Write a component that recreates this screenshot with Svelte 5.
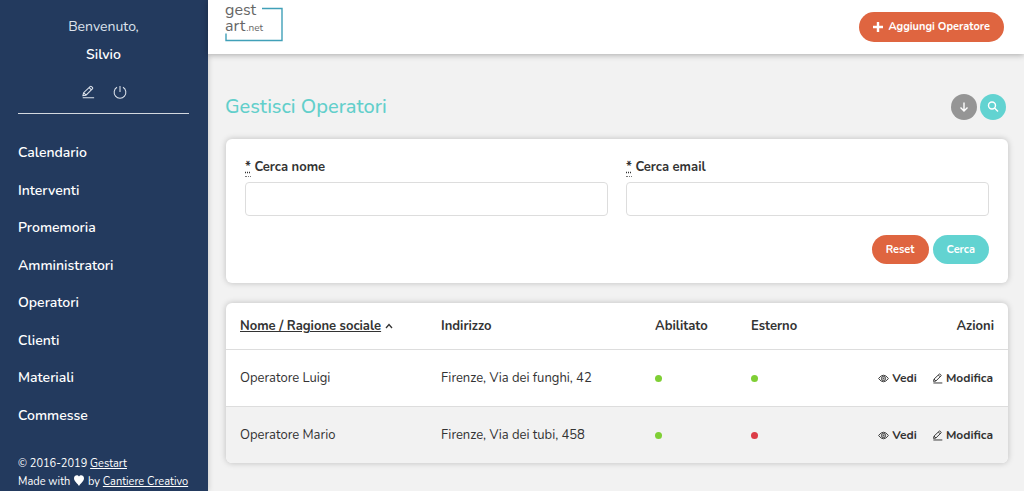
<script lang="ts">
type Operator = {
  name: string
  address: string
  enabled: boolean
  external: boolean
}

const menu: string[] = [
  'Calendario',
  'Interventi',
  'Promemoria',
  'Amministratori',
  'Operatori',
  'Clienti',
  'Materiali',
  'Commesse'
]

const operators: Operator[] = [
  { name: 'Operatore Luigi', address: 'Firenze, Via dei funghi, 42', enabled: true, external: true },
  { name: 'Operatore Mario', address: 'Firenze, Via dei tubi, 458', enabled: true, external: false }
]

let searchName = $state('')
let searchEmail = $state('')

function reset() {
  searchName = ''
  searchEmail = ''
}
</script>

{#snippet pencil()}
  <svg class="icon" viewBox="0 0 16 16" aria-hidden="true">
    <path d="M2 14.5h13M2.2 12.2l.8-3.4 7.4-7q.8-.7 1.6 0l1 1q.8.8 0 1.6l-7.3 7.2zM9.3 3l2.6 2.6M3 8.8l2.7 2.8" />
  </svg>
{/snippet}

{#snippet dot(on: boolean, label: string)}
  <span class="dot" class:off={!on} role="img" aria-label={label}></span>
{/snippet}

<div class="layout">
  <aside class="sidebar">
    <div class="welcome">
      <p>Benvenuto,</p>
      <p class="user">Silvio</p>
      <div class="user-actions">
        <a href="#profile" aria-label="Modifica profilo">{@render pencil()}</a>
        <a href="#logout" aria-label="Esci">
          <svg class="icon" viewBox="0 0 16 16" aria-hidden="true">
            <path d="M8 1v7M4.6 2.6a6.7 6.7 0 1 0 6.8 0" />
          </svg>
        </a>
      </div>
    </div>

    <nav>
      {#each menu as item}
        <a href="#{item.toLowerCase()}">{item}</a>
      {/each}
    </nav>

    <footer>
      <p>© 2016-2019 <a href="#gestart">Gestart</a></p>
      <p>
        Made with
        <svg class="heart" viewBox="0 0 10 11" role="img" aria-label="love">
          <path d="M5 11C4 8.800 0 6.500 0 3.200 0 .2 3.700-.7 5 1.500 6.300-.7 10 .2 10 3.200 10 6.500 6 8.800 5 11z" />
        </svg>
        by <a href="#cantiere">Cantiere Creativo</a>
      </p>
    </footer>
  </aside>

  <div class="main">
    <header>
      <a class="logo" href="#home">
        <svg class="logo-frame" viewBox="0 0 58 36" aria-hidden="true">
          <path d="M37 2.500h20v32H1v-7" />
        </svg>
        <span>gest</span>
        <span>art<small>.net</small></span>
      </a>
      <a class="btn btn-add" href="#new">
        <svg class="plus" viewBox="0 0 10 10" aria-hidden="true"><path d="M5 0v10M0 5h10" /></svg>
        Aggiungi Operatore
      </a>
    </header>

    <main>
      <div class="heading">
        <h1>Gestisci Operatori</h1>
        <div class="tools">
          <button class="round" type="button" aria-label="Scarica">
            <svg viewBox="0 0 12 12" aria-hidden="true"><path d="M6 1.500v8.500M2.500 6.500 6 10l3.500-3.500" /></svg>
          </button>
          <button class="round search" type="button" aria-label="Cerca operatori">
            <svg viewBox="0 0 12 12" aria-hidden="true"><circle cx="5" cy="4.500" r="3.500" /><path d="m7.500 7 3.500 3.500" /></svg>
          </button>
        </div>
      </div>

      <form class="card filters" onsubmit={(e) => e.preventDefault()}>
        <div class="fields">
          <div class="field">
            <label for="name"><abbr title="obbligatorio">*</abbr> Cerca nome</label>
            <input id="name" type="text" bind:value={searchName} />
          </div>
          <div class="field">
            <label for="email"><abbr title="obbligatorio">*</abbr> Cerca email</label>
            <input id="email" type="text" bind:value={searchEmail} />
          </div>
        </div>
        <div class="buttons">
          <button class="btn" type="button" onclick={reset}>Reset</button>
          <button class="btn btn-search" type="submit">Cerca</button>
        </div>
      </form>

      <div class="card">
        <table>
          <thead>
            <tr>
              <th class="col-name">
                <a href="#sort">Nome / Ragione sociale</a>
                <svg class="caret" viewBox="0 0 8 6" aria-hidden="true"><path d="M1 5l3-3.500L7 5" /></svg>
              </th>
              <th class="col-address">Indirizzo</th>
              <th class="col-flag">Abilitato</th>
              <th class="col-flag">Esterno</th>
              <th class="actions">Azioni</th>
            </tr>
          </thead>
          <tbody>
            {#each operators as op}
              <tr>
                <td>{op.name}</td>
                <td>{op.address}</td>
                <td>{@render dot(op.enabled, op.enabled ? 'Abilitato' : 'Non abilitato')}</td>
                <td>{@render dot(op.external, op.external ? 'Esterno' : 'Interno')}</td>
                <td class="actions">
                  <div class="links">
                    <a href="#show">
                      <svg class="icon" viewBox="0 0 16 16" aria-hidden="true">
                        <path d="M.8 8Q8-1.500 15.200 8 8 17.500.8 8z" /><circle cx="8" cy="8" r="3" /><circle cx="8" cy="8" r=".8" />
                      </svg>
                      Vedi
                    </a>
                    <a href="#edit">{@render pencil()} Modifica</a>
                  </div>
                </td>
              </tr>
            {/each}
          </tbody>
        </table>
      </div>
    </main>
  </div>
</div>

<style>
  :global(body) {
    background: #f2f2f2;
    color: #333;
    font-family: Nunito, Lato, sans-serif;
    font-size: 13px;
    line-height: 18px;
  }

  p, h1 {
    margin: 0;
  }

  a {
    color: inherit;
    text-decoration: none;
  }

  svg {
    fill: none;
    stroke: currentColor;
  }

  .layout {
    display: flex;
    min-height: 100vh;
  }

  /* sidebar */
  .sidebar {
    box-sizing: border-box;
    width: 208px;
    flex-shrink: 0;
    display: flex;
    flex-direction: column;
    padding: 13px 19px 0 18px;
    background: #233a5e;
    color: #fff;
    font-size: 14px;
    line-height: 28px;
    box-shadow: 0 0 6px rgba(0, 0, 0, 0.2);
  }

  .welcome {
    text-align: center;
    border-bottom: 1px solid #d3d8df;
  }

  .welcome p {
    color: #dde3ec;
  }

  .welcome .user {
    color: #fff;
    font-weight: 600;
  }

  .user-actions {
    display: flex;
    justify-content: center;
    gap: 18px;
    padding: 16px 0 14px;
  }

  .user-actions a {
    display: flex;
    color: #dde3ec;
  }

  .icon {
    width: 14px;
    height: 14px;
    stroke-width: 1.2;
  }

  nav {
    flex: 1;
    display: flex;
    flex-direction: column;
    justify-content: space-between;
    padding: 25px 0 25px;
    font-weight: 600;
  }

  footer {
    font-size: 11px;
    line-height: 18px;
    white-space: nowrap;
  }

  footer a {
    text-decoration: underline;
  }

  .heart {
    width: 10px;
    height: 11px;
    margin: 0 1px;
    fill: currentColor;
    stroke: none;
    vertical-align: -1px;
  }

  /* top bar */
  .main {
    flex: 1;
    min-width: 0;
  }

  header {
    display: flex;
    justify-content: space-between;
    align-items: center;
    padding: 0 20px 0 17px;
    height: 54px;
    background: #fff;
    box-shadow: 0 1px 6px rgba(0, 0, 0, 0.3);
  }

  .logo {
    position: relative;
    width: 58px;
    height: 50px;
    color: #666;
    font-size: 16px;
    line-height: 16px;
  }

  .logo span {
    display: block;
  }

  .logo small {
    font-size: 10px;
    line-height: 10px;
    margin-left: 1px;
  }

  .logo-frame {
    position: absolute;
    left: 0;
    top: 4px;
    width: 58px;
    height: 36px;
    stroke: #40a0b8;
    stroke-width: 1.4;
  }

  .btn {
    display: inline-flex;
    align-items: center;
    justify-content: center;
    box-sizing: border-box;
    height: 29px;
    padding: 0 14px;
    border: 0;
    border-radius: 15px;
    background: #df6540;
    color: #fff;
    font: bold 11px/18px Nunito, Lato, sans-serif;
    cursor: pointer;
  }

  .btn-add {
    height: 30px;
    gap: 5px;
  }

  .btn-search {
    background: #62d3d1;
  }

  .plus {
    width: 10px;
    height: 10px;
    stroke-width: 2.4;
  }

  /* content */
  main {
    padding: 40px 16px 28px 17px;
  }

  .heading {
    display: flex;
    justify-content: space-between;
    align-items: center;
    padding-right: 2px;
    margin-bottom: 19px;
  }

  h1 {
    color: #62cfcb;
    font-size: 20px;
    line-height: 26px;
    font-weight: 500;
  }

  .tools {
    display: flex;
    gap: 3px;
  }

  .round {
    display: flex;
    align-items: center;
    justify-content: center;
    width: 26px;
    height: 26px;
    padding: 0;
    border: 0;
    border-radius: 50%;
    background: #959595;
    color: #fff;
    cursor: pointer;
  }

  .round.search {
    background: #62d3d1;
  }

  .round svg {
    width: 12px;
    height: 12px;
    stroke-width: 1.4;
  }

  .card {
    overflow: hidden;
    margin-left: 1px;
    border-radius: 6px;
    background: #fff;
    box-shadow: 0 0 6px rgba(0, 0, 0, 0.22);
  }

  .filters {
    padding: 19px;
    margin-bottom: 20px;
  }

  .fields {
    display: grid;
    grid-template-columns: 1fr 1fr;
    gap: 18px;
  }

  .field {
    display: flex;
    flex-direction: column;
    gap: 6px;
  }

  label {
    font-weight: bold;
  }

  abbr {
    text-decoration: underline dotted;
    border-bottom: 1px dotted #777;
  }

  input {
    box-sizing: border-box;
    width: 100%;
    height: 34px;
    padding: 0 10px;
    border: 1px solid #ddd;
    border-radius: 4px;
    background: #fff;
    font: inherit;
  }

  .buttons {
    display: flex;
    justify-content: flex-end;
    gap: 4px;
    margin-top: 19px;
  }

  table {
    width: 100%;
    border-collapse: collapse;
    table-layout: fixed;
  }

  th, td {
    height: 56px;
    padding: 0 0 0 14px;
    text-align: left;
  }

  th {
    height: 46px;
    color: #333;
    font-weight: bold;
    white-space: nowrap;
  }

  th a {
    text-decoration: underline;
  }

  .col-name {
    width: 187px;
  }

  .col-address {
    width: 200px;
  }

  .col-flag {
    width: 82px;
  }

  tbody tr {
    border-top: 1px solid #ddd;
  }

  tbody tr:nth-child(even) {
    background: #f2f2f2;
  }

  .caret {
    width: 8px;
    height: 6px;
    stroke-width: 1.3;
    vertical-align: 1px;
  }

  .dot {
    display: block;
    width: 7px;
    height: 7px;
    border-radius: 50%;
    background: #7fcf35;
  }

  .dot.off {
    background: #dc3d47;
  }

  .actions {
    padding-right: 14px;
    text-align: right;
  }

  .links {
    display: flex;
    justify-content: flex-end;
    gap: 15px;
    padding-right: 1px;
    color: #333;
    font-size: 12px;
    font-weight: bold;
  }

  .links a {
    display: flex;
    align-items: center;
    gap: 3px;
  }

  .links .icon {
    width: 11px;
    height: 11px;
    stroke-width: 1.4;
  }
</style>
